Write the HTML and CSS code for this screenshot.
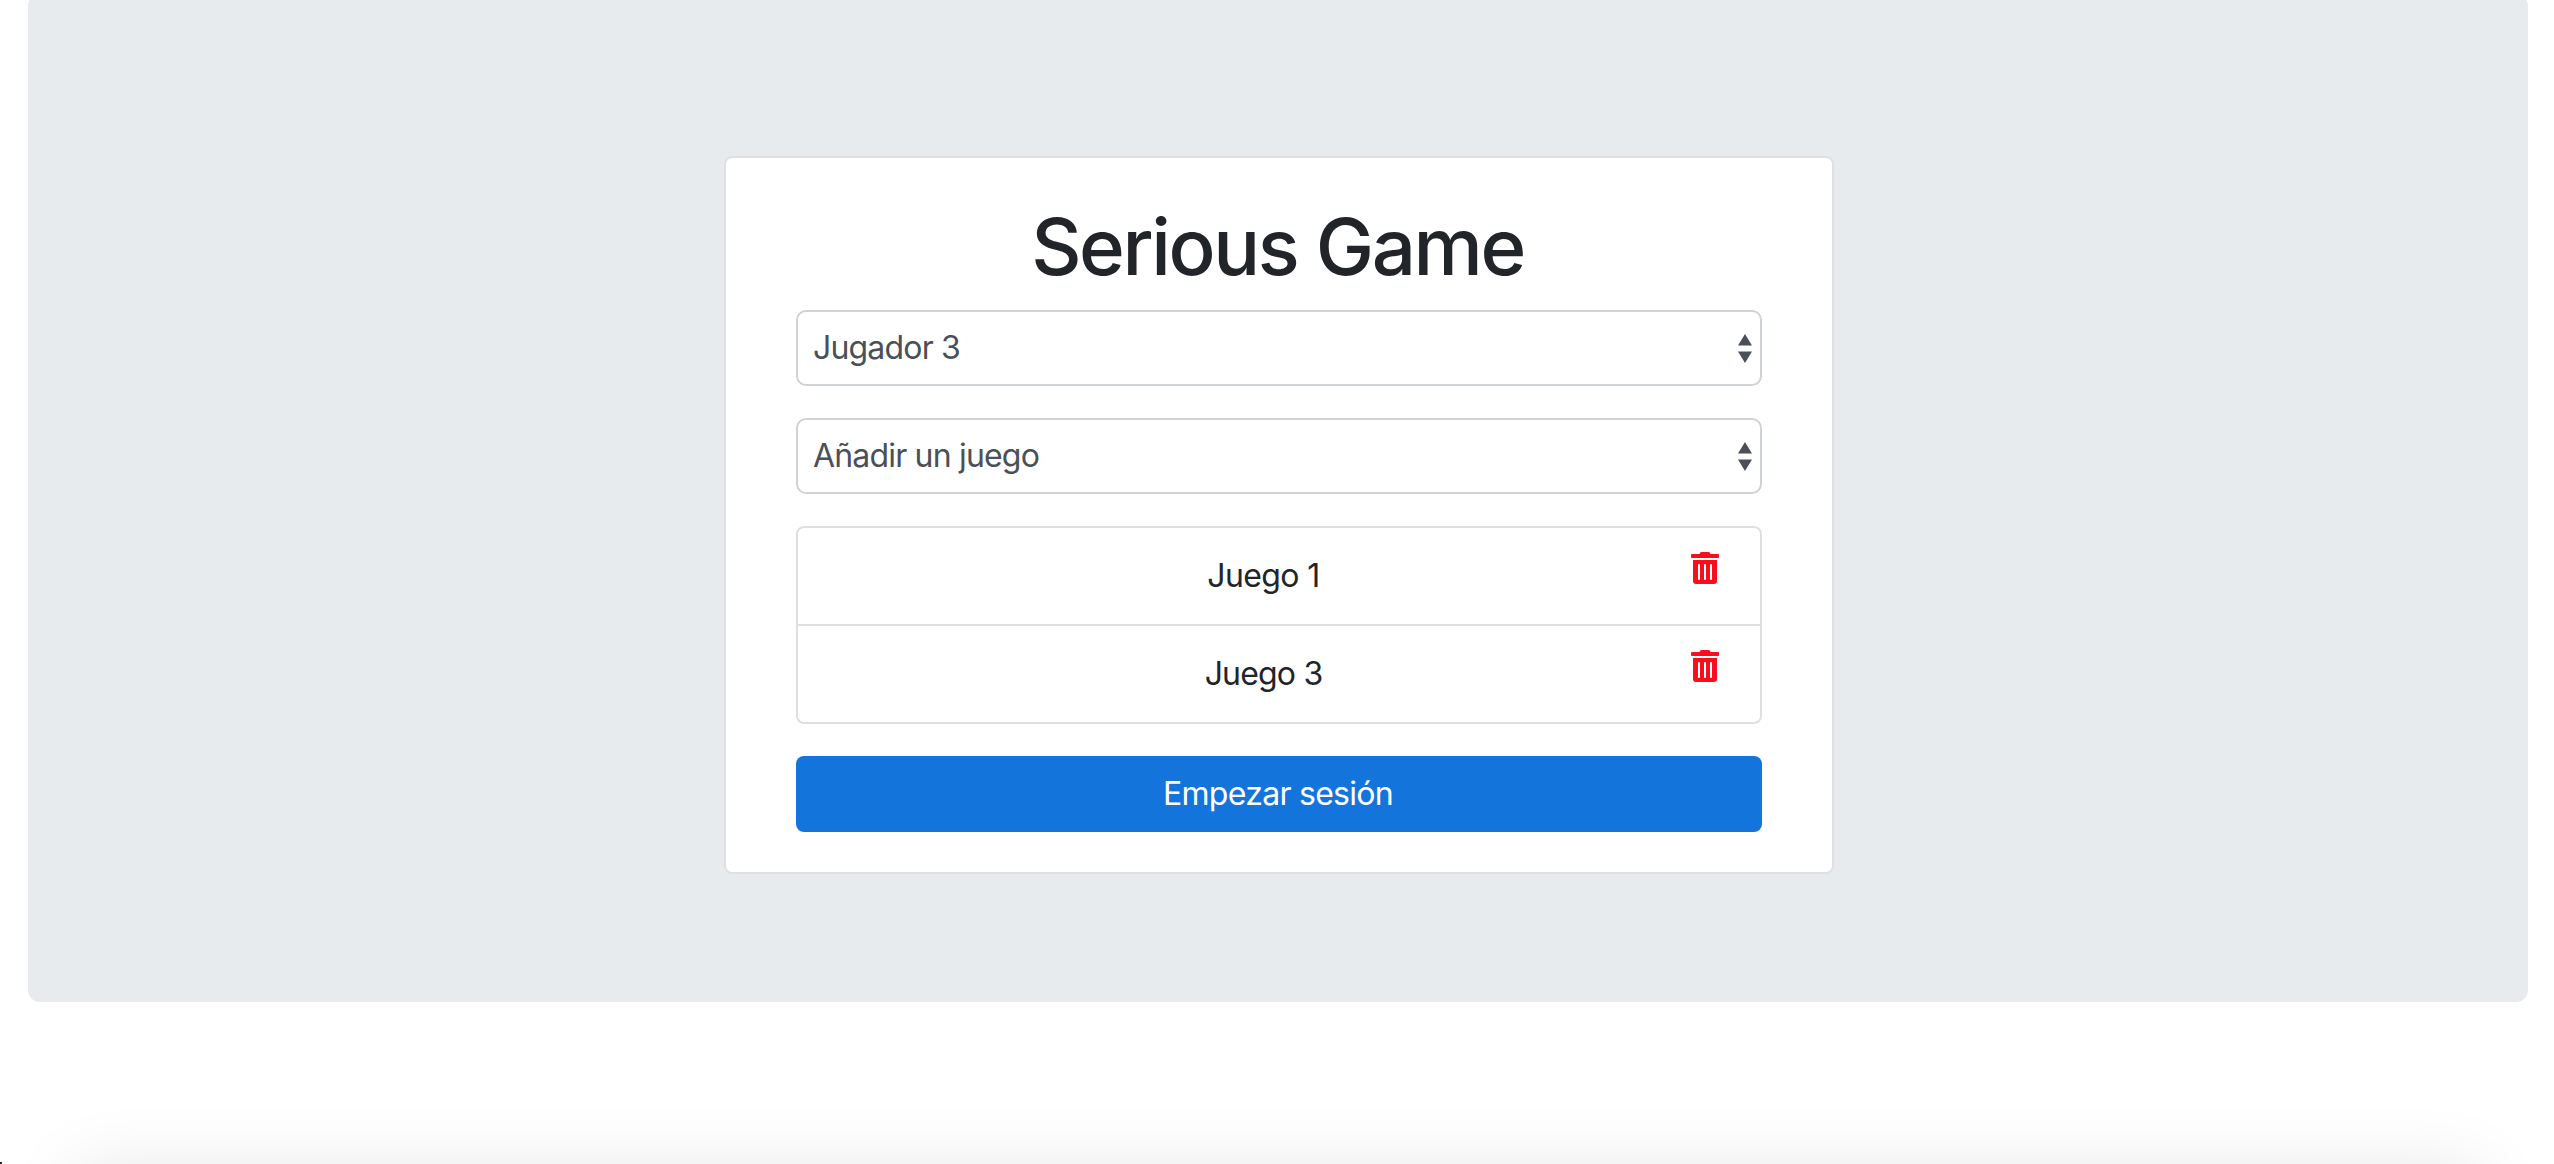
FILE: index.html
```html
<!DOCTYPE html>
<html lang="es">
<head>
  <meta charset="utf-8">
  <title>Serious Game</title>
  <link rel="stylesheet" href="styles.css">
</head>
<body>
  <svg class="sprite" aria-hidden="true">
    <symbol id="trash" viewBox="0 0 448 512">
      <path d="M32 464a48 48 0 0 0 48 48h288a48 48 0 0 0 48-48V128H32zm272-256a16 16 0 0 1 32 0v224a16 16 0 0 1-32 0zm-96 0a16 16 0 0 1 32 0v224a16 16 0 0 1-32 0zm-96 0a16 16 0 0 1 32 0v224a16 16 0 0 1-32 0zM432 32H312l-9.4-18.7A24 24 0 0 0 281.1 0H166.8a23.72 23.72 0 0 0-21.4 13.3L136 32H16A16 16 0 0 0 0 48v32a16 16 0 0 0 16 16h416a16 16 0 0 0 16-16V48a16 16 0 0 0-16-16z"/>
    </symbol>
  </svg>
  <main class="jumbotron">
    <form class="card">
      <h1 class="title">Serious Game</h1>
      <select class="select" aria-label="Jugador">
        <option>Jugador 3</option>
      </select>
      <select class="select" aria-label="Juego">
        <option>Añadir un juego</option>
      </select>
      <ul class="games">
        <li class="game">
          <span class="game-name game-name-narrow">Juego 1</span>
          <svg class="game-delete"><use href="#trash"/></svg>
        </li>
        <li class="game">
          <span class="game-name">Juego 3</span>
          <svg class="game-delete"><use href="#trash"/></svg>
        </li>
      </ul>
      <button class="start" type="button">Empezar sesión</button>
    </form>
  </main>
  <div class="bottom-shadow"></div>
  <div class="corner"></div>
</body>
</html>
```
FILE: styles.css
```css
* {
  box-sizing: border-box;
}

body {
  margin: 0;
  height: 1164px;
  overflow: hidden;
  background: #fff;
  color: #212529;
  font: 400 32px/48px Inter, "Liberation Sans", sans-serif;
}

.sprite {
  display: none;
}

.jumbotron {
  margin: -6px 26px 0 28px;
  height: 1008px;
  padding-top: 162px;
  border-radius: 12px;
  background: #e7ebee;
}

.card {
  display: flex;
  flex-direction: column;
  width: 1110px;
  height: 718px;
  margin: 0 auto 0 696px;
  padding: 40px 70px;
  border: 2px solid #dfe0e1;
  border-radius: 8px;
  background: #fff;
}

.title {
  margin: 0 0 16px;
  padding: 1px 3px 0 0;
  height: 96px;
  font-size: 78px;
  font-weight: 500;
  line-height: 96px;
  letter-spacing: -2.4px;
  text-align: center;
}

.select {
  appearance: none;
  width: 100%;
  height: 76px;
  margin: 0 0 32px;
  padding: 0 40px 0 15px;
  border: 2px solid #ced3d7;
  border-radius: 10px;
  background: #fff url("data:image/svg+xml,%3Csvg xmlns='http://www.w3.org/2000/svg' viewBox='0 0 4 5' preserveAspectRatio='none'%3E%3Cpath fill='%23495057' d='M2 0L0 2h4zm0 5L0 3h4z'/%3E%3C/svg%3E") no-repeat right 8px center / 14px 29px;
  color: #495057;
  font: inherit;
  letter-spacing: -0.82px;
}

.games {
  margin: 0 0 32px;
  padding: 0;
  border: 2px solid #dfdfdf;
  border-radius: 8px;
  list-style: none;
}

.game {
  display: flex;
  height: 96px;
  padding: 24px 41px 24px 40px;
}

.game + .game {
  height: 98px;
  border-top: 2px solid #dfdfdf;
}

.game-name {
  flex: 1;
  padding-right: 2px;
  letter-spacing: -0.82px;
  text-align: center;
}

.game-name-narrow {
  letter-spacing: -0.6px;
}

.game-delete {
  width: 28px;
  height: 32px;
  fill: #fc0d1b;
}

.start {
  height: 76px;
  padding: 0 2px 0 0;
  border: 0;
  border-radius: 8px;
  background: #1375dc;
  color: #fff;
  font: inherit;
  letter-spacing: -0.72px;
}

/* Shadow rising from below the fold */
.bottom-shadow {
  position: fixed;
  top: 1170px;
  left: 74px;
  right: 74px;
  height: 200px;
  box-shadow: 0 0 70px rgba(0, 0, 0, 0.1);
}

.corner {
  position: fixed;
  bottom: 0;
  left: 0;
  width: 2px;
  height: 2px;
  background: #1d2b2b;
}
```
